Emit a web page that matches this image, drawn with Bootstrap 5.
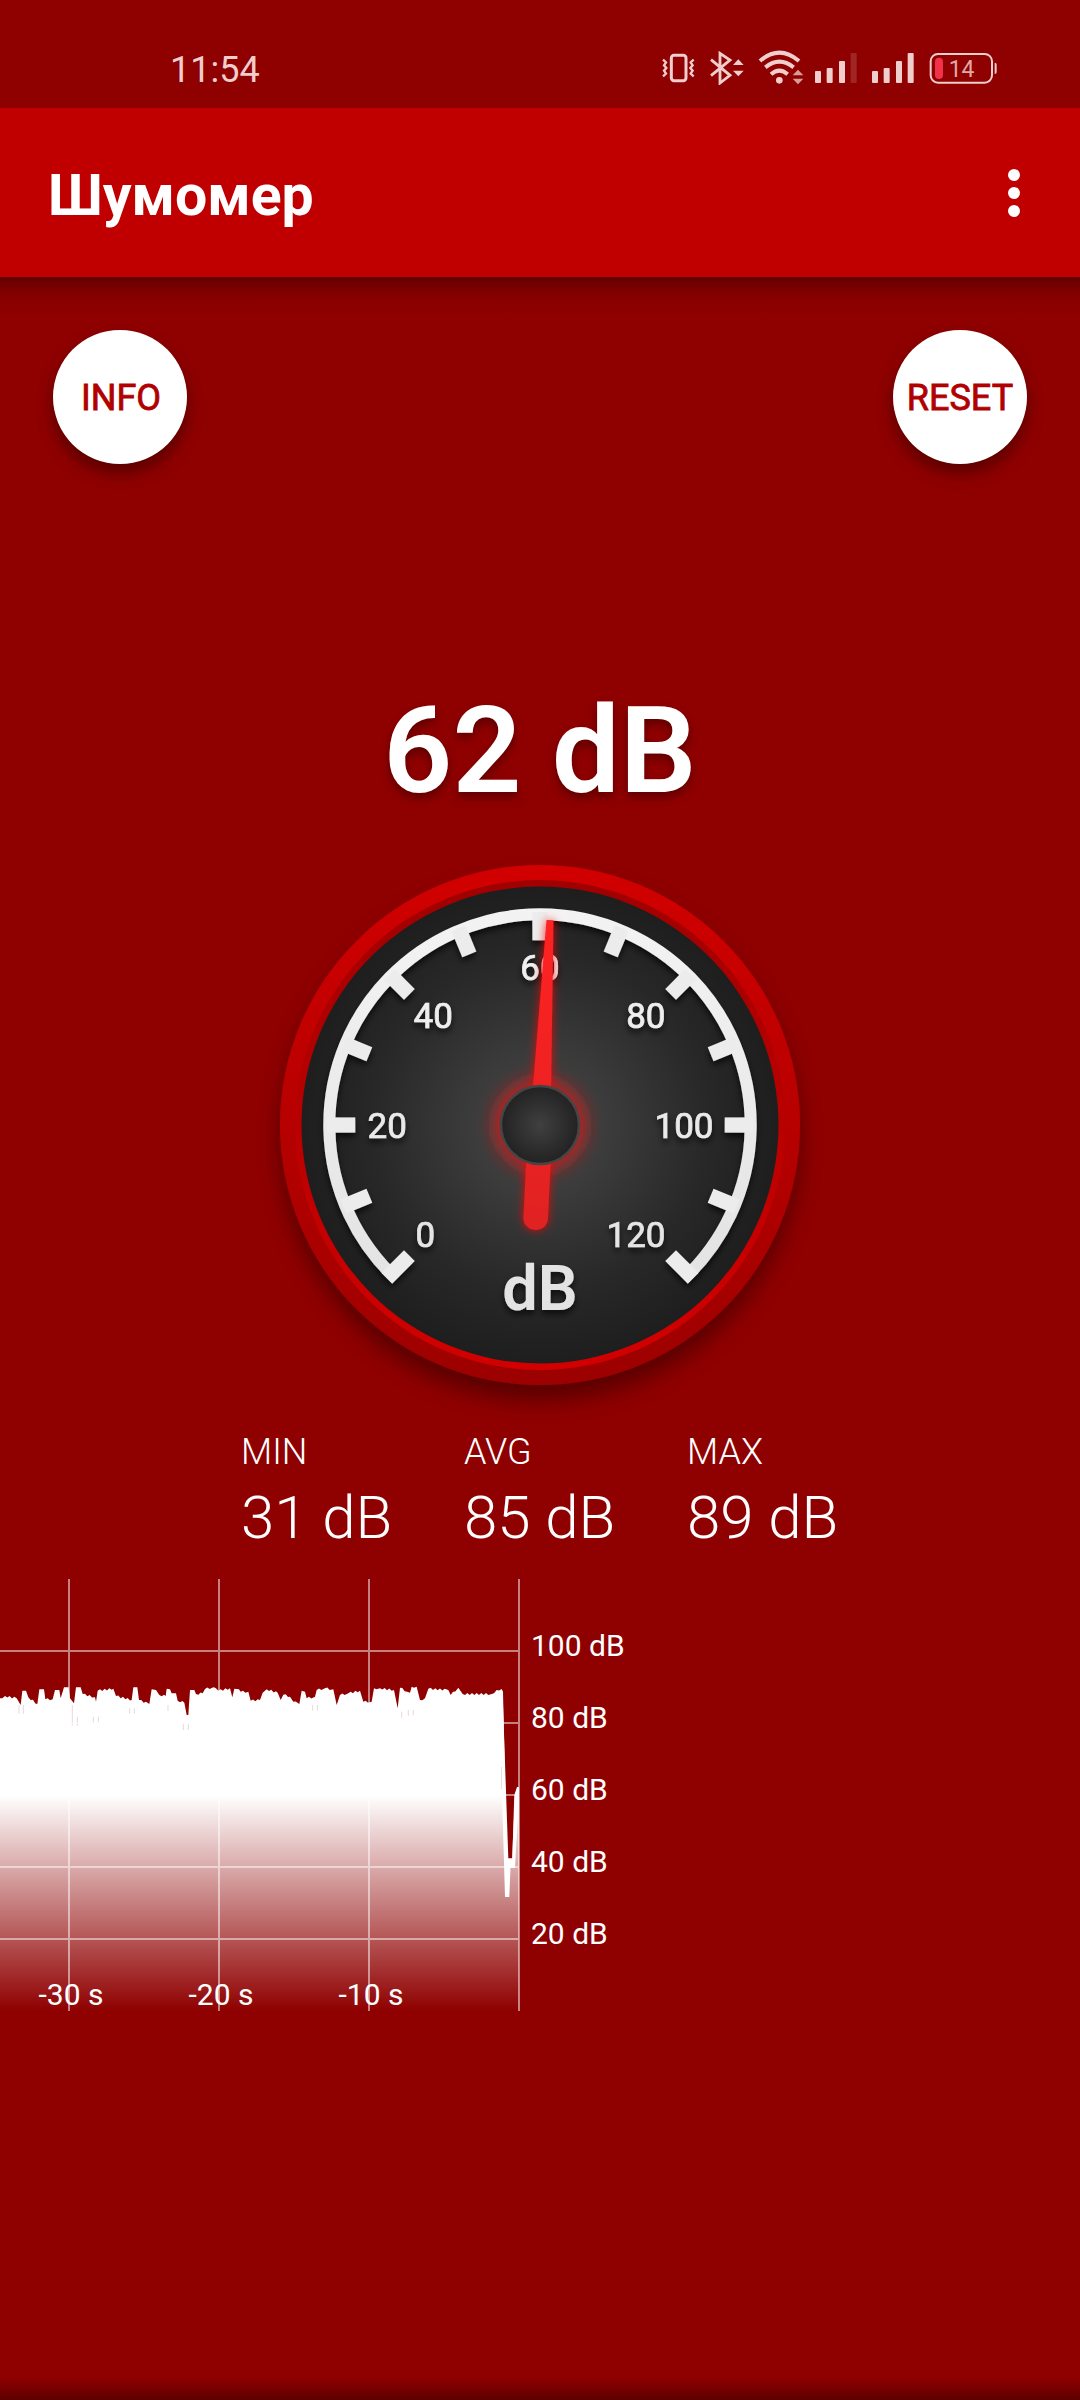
<!DOCTYPE html>
<html lang="ru">
<head>
<meta charset="utf-8">
<meta name="viewport" content="width=device-width, initial-scale=1">
<title>Шумомер</title>
<link href="https://cdn.jsdelivr.net/npm/bootstrap@5.3.0/dist/css/bootstrap.min.css" rel="stylesheet">
<style>
body{background:#8f0000;color:#fff;font-family:Roboto,"Liberation Sans",sans-serif;width:1080px;height:2400px;overflow:hidden}
svg{display:block;flex:none}
svg text{font-family:Roboto,"Liberation Sans",sans-serif}
.statusbar{height:108px;padding:50px 82px 0 170px;color:#f0cece}
.clock{font-size:36px;line-height:36px;margin-top:2px}
.appbar{height:169px;background:#c00000;padding:0 60px 0 48px}
.appbar h1{font-size:57.2px;line-height:64px;font-weight:700;margin-top:6px}
.round{width:134px;height:134px;background:#fff;color:#b00000;font-size:36px;font-weight:400;line-height:1;-webkit-text-stroke:.8px #b00000;box-shadow:0 9px 16px rgba(0,0,0,.38)}
.info-btn{padding:2px 0 0 2px}
.reset-btn{padding:1px 0 0}
.actions{padding:53px 53px 0;height:394px;background:linear-gradient(#600000,#7c0000 12px,#8a0000 24px,#8f0000 38px) no-repeat}
.reading{font-size:121px;font-weight:600;line-height:160px;height:169px;text-shadow:0 5px 10px rgba(0,0,0,.35)}
.stats{gap:71px;height:140px;padding-right:2px}
.stats>div{width:152px;font-weight:300;white-space:nowrap;padding-left:1px}
.cap{font-size:36px;line-height:44px}
.val{font-size:60px;line-height:70px;margin-top:9px}
.bottomshade{height:22px;background:linear-gradient(transparent,#5c0000)}
</style>
</head>
<body class="d-flex flex-column">
<div class="statusbar d-flex align-items-start justify-content-between">
  <div class="clock">11:54</div>
  <div class="d-flex">
    <svg width="33" height="35" viewBox="66 60 99 105" fill="none" stroke="currentColor"><rect x="94" y="76" width="44" height="76" rx="8" stroke-width="9"/><path d="M69 89l9 8-6 9 7 8-7 8 6 9-9 8M161 89l-9 8 6 9-7 8 7 8-6 9 9 8" stroke-width="7"/></svg>
    <svg width="35" height="35" viewBox="210 60 105 105" style="margin-left:15px" fill="none" stroke="currentColor"><path d="M213 89l57 47-30 23V70l30 20-57 47" stroke-width="8.500"/><path d="M295 88l16 17h-32zM295 139l16-17h-32z" fill="currentColor" stroke="none"/></svg>
    <svg width="46" height="35" viewBox="354 60 138 105" style="margin-left:13px" fill="none" stroke="currentColor" stroke-width="12"><path d="M360 93q58-50 117 0M376 112q42-34 85 0M393 133q25-22 50 0"/><circle cx="418" cy="151" r="10" fill="currentColor" stroke="none"/><path d="M474 119l16 17h-32zM474 163l16-17h-32z" fill="#d99a9a" stroke="none"/></svg>
    <svg width="44" height="35" viewBox="522 60 132 105" style="margin-left:10px" fill="currentColor"><rect x="525" y="123" width="18" height="36" rx="3"/><rect x="560" y="114" width="18" height="45" rx="3"/><rect x="597" y="93" width="18" height="66" rx="3"/><rect x="632" y="69" width="18" height="90" rx="3" opacity=".18"/></svg>
    <svg width="44" height="35" viewBox="693 60 132 105" style="margin-left:13px" fill="currentColor"><rect x="696" y="123" width="18" height="36" rx="3"/><rect x="731" y="114" width="18" height="45" rx="3"/><rect x="768" y="93" width="18" height="66" rx="3"/><rect x="803" y="69" width="18" height="90" rx="3"/></svg>
    <svg width="69" height="35" viewBox="867 60 207 105" style="margin-left:14px" fill="none" stroke="currentColor"><rect x="872" y="72" width="184" height="86" rx="22" stroke-width="6"/><rect x="885" y="83" width="24" height="64" rx="12" fill="#f0324a" stroke="none"/><path d="M1064 98q6 0 6 6v22q0 6-6 6z" fill="currentColor" stroke="none"/><text x="926" y="141" font-size="69" fill="#e0a8a8" stroke="none">14</text></svg>
  </div>
</div>
<header class="appbar d-flex align-items-center justify-content-between">
  <h1 class="mb-0">Шумомер</h1>
  <svg width="12" height="48" viewBox="0 0 12 48" fill="#fff"><circle cx="6" cy="6" r="6"/><circle cx="6" cy="24" r="6"/><circle cx="6" cy="42" r="6"/></svg>
</header>
<div class="actions d-flex justify-content-between align-items-start">
  <button class="round info-btn btn rounded-circle border-0">INFO</button>
  <button class="round reset-btn btn rounded-circle border-0">RESET</button>
</div>
<div class="reading text-center">62 dB</div>
<svg width="1080" height="590" viewBox="0 840 1080 590">
  <defs>
    <linearGradient id="rim" x1="0" y1="0" x2="0" y2="1"><stop offset="0" stop-color="#d20000"/><stop offset="1" stop-color="#9c0000"/></linearGradient>
    <linearGradient id="rim2" x1="0" y1="0" x2="0" y2="1"><stop offset="0" stop-color="#a00000"/><stop offset="1" stop-color="#d20000"/></linearGradient>
    <radialGradient id="face"><stop offset="0" stop-color="#484848"/><stop offset=".3" stop-color="#3b3b3b"/><stop offset=".7" stop-color="#282828"/><stop offset="1" stop-color="#1e1e1e"/></radialGradient>
    <radialGradient id="hub"><stop offset="0" stop-color="#404040"/><stop offset="1" stop-color="#222"/></radialGradient>
    <linearGradient id="ink" gradientUnits="userSpaceOnUse" x1="0" y1="908" x2="0" y2="1310"><stop offset="0" stop-color="#f3f3f3"/><stop offset="1" stop-color="#e2e2e2"/></linearGradient>
    <linearGradient id="ndl" gradientUnits="userSpaceOnUse" x1="0" y1="920" x2="0" y2="1230"><stop offset="0" stop-color="#ff2020"/><stop offset="1" stop-color="#e02020"/></linearGradient>
    <filter id="sh" x="-20%" y="-20%" width="140%" height="140%"><feDropShadow dx="0" dy="15" stdDeviation="11" flood-opacity=".38"/></filter>
    <filter id="sm" x="-10%" y="-10%" width="120%" height="120%"><feDropShadow dx="0" dy="4" stdDeviation="3" flood-opacity=".7"/></filter>
    <filter id="gl" filterUnits="userSpaceOnUse" x="440" y="880" width="200" height="400"><feDropShadow dx="0" dy="0" stdDeviation="5" flood-color="#f00" flood-opacity=".85"/></filter>
    <filter id="gl2" filterUnits="userSpaceOnUse" x="440" y="1020" width="200" height="210"><feGaussianBlur stdDeviation="9"/></filter>
  </defs>
  <circle cx="540" cy="1125" r="260" fill="url(#rim)" filter="url(#sh)"/>
  <circle cx="540" cy="1125" r="245" fill="url(#rim2)"/>
  <circle cx="540" cy="1125" r="238.5" fill="url(#face)"/>
  <g filter="url(#sm)">
    <path d="M396.3 1279.1A210.7 210.7 0 1 1 683.7 1279.1" fill="none" stroke="url(#ink)" stroke-width="12"/>
    <g id="ticks" fill="#ececec"></g>
    <g fill="url(#ink)" stroke="url(#ink)" stroke-width=".7" font-size="35" font-weight="400">
      <text x="415.500" y="1247">0</text><text x="367.500" y="1138">20</text><text x="413.500" y="1028.3">40</text>
      <text x="540" y="979.7" text-anchor="middle">60</text>
      <text x="665.5" y="1028.3" text-anchor="end">80</text><text x="713.500" y="1138" text-anchor="end">100</text><text x="665.5" y="1247" text-anchor="end">120</text>
      <text x="540" y="1309.5" text-anchor="middle" font-size="63" font-weight="600" stroke="none">dB</text>
    </g>
  </g>
  <circle cx="540" cy="1125" r="46" fill="#f01818" opacity=".75" filter="url(#gl2)"/>
  <g filter="url(#gl)" fill="url(#ndl)">
    <g transform="rotate(2.8 540 1125)"><path d="M536.5 920h7l6.2 180h-19z"/><rect x="528" y="1130" width="24.5" height="100" rx="11.5"/></g>
  </g>
  <circle cx="540" cy="1125" r="39" fill="url(#hub)" stroke="#454545" stroke-width="2.5"/>
</svg>
<div class="stats d-flex justify-content-center">
  <div><div class="cap">MIN</div><div class="val">31 dB</div></div>
  <div><div class="cap">AVG</div><div class="val">85 dB</div></div>
  <div><div class="cap">MAX</div><div class="val">89 dB</div></div>
</div>
<svg width="660" height="450" viewBox="0 1570 660 450">
  <defs><linearGradient id="fade" gradientUnits="userSpaceOnUse" x1="0" y1="675" x2="0" y2="1323"><stop offset="0" stop-color="#fff"/><stop offset="1" stop-color="#fff" stop-opacity="0"/></linearGradient></defs>
  <g transform="translate(0 1570) scale(.333333)">
    <path id="wave" fill="url(#fade)"/>
  </g>
  <path d="M69 1579V2011M219 1579V2011M369 1579V2011M519 1579V2011M0 1651H519M0 1723H519M0 1795H519M0 1867H519M0 1939H519" fill="none" stroke="#fff" stroke-opacity=".5" stroke-width="2"/>
  <path fill="#fff" d="M502.5 1690L508.300 1858.300H512.300L514.300 1795L517 1787H519V1797L515 1868H510.500L509.300 1897H505L502 1795Z"/>
  <g fill="#fff" font-size="30">
    <text x="531" y="1656">100 dB</text><text x="531" y="1728">80 dB</text><text x="531" y="1800">60 dB</text><text x="531" y="1872">40 dB</text><text x="531" y="1944">20 dB</text>
    <text x="71" y="2004.500" text-anchor="middle">-30 s</text><text x="221" y="2004.500" text-anchor="middle">-20 s</text><text x="371" y="2004.500" text-anchor="middle">-10 s</text>
  </g>
</svg>
<div class="bottomshade mt-auto"></div>
<script>
// Scale ticks: 13 marks, 22.5 degrees apart, around the dial.
let t='';
for(let i=0;i<13;i++)t+=`<rect x="532.4" y="${i%12?912:908.4}" width="15.2" height="${i%12?28.3:31.9}" transform="rotate(${-135+i*22.5} 540 1125)"/>`;
document.getElementById('ticks').innerHTML=t;
// Recorded level, three units per pixel; y grows downwards from the chart's top.
const level=[0,385,15,378,50,385,62,405,67,362,78,362,85,382,112,402,118,358,132,358,136,388,158,388,165,360,178,360,182,385,192,352,206,352,210,385,222,400,228,352,242,352,248,372,285,382,288,395,293,362,340,356,348,378,395,390,400,352,412,352,417,390,448,402,455,358,468,360,478,375,497,378,500,356,510,358,515,370,528,370,533,392,553,398,560,435,565,435,570,360,583,360,588,372,608,370,615,357,640,352,655,362,690,355,697,382,703,356,717,358,722,365,745,365,752,392,780,390,788,368,800,358,833,368,842,390,850,374,870,380,880,395,898,402,905,362,915,365,920,385,945,380,950,360,975,355,1000,358,1010,405,1020,375,1045,370,1080,362,1090,395,1115,395,1122,355,1140,355,1182,360,1193,415,1200,353,1222,365,1230,368,1235,350,1250,350,1260,390,1275,385,1285,356,1345,360,1352,375,1375,353,1388,372,1475,372,1490,360,1505,357,1509,365,1521,905,1535,890,1545,680,1557,660];
let d='M0 1323';
for(let i=0;i<level.length;i+=2){
  const x=level[i],y=level[i+1],px=level[i-2],py=level[i-1];
  if(i&&x-px>14&&y<420)for(let s=px+7;s<x-4;s+=7)d+=`L${s} ${(py+(y-py)*(s-px)/(x-px)+((s/7|0)%2?3:-3)).toFixed(1)}`;
  d+=`L${x} ${y}`;
}
// Narrow dips that show between neighbouring samples.
const dips=[[57,405,431],[70,405,431],[217,405,467],[232,440,467],[280,440,458],[295,440,458],[389,415,431],[403,415,431],[504,405,422],[550,460,480],[565,460,480],[938,405,422],[952,405,422],[1205,425,443],[1225,420,438],[1240,420,436],[1505,590,657]];
const w=document.getElementById('wave');
w.setAttribute('d',d+'V1323Z');
w.insertAdjacentHTML('afterend','<path d="'+dips.map(p=>`M${p[0]} ${p[1]}V${p[2]}`).join('')+'" stroke="#dcc4c8" stroke-width="2"/>');
</script>
<script src="https://cdn.jsdelivr.net/npm/bootstrap@5.3.0/dist/js/bootstrap.bundle.min.js"></script>
</body>
</html>
